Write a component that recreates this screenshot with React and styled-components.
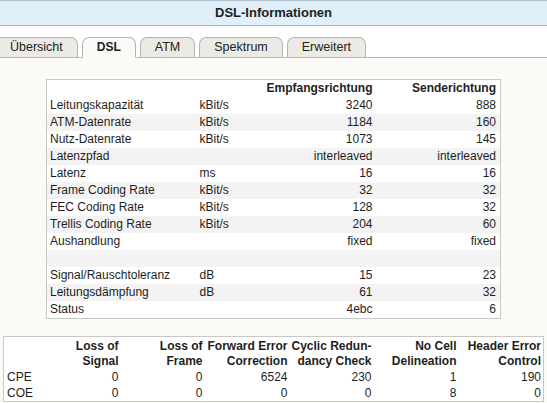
import React from "react";
import styled, { createGlobalStyle } from "styled-components";

const GlobalStyle = createGlobalStyle`
  html, body {
    margin: 0;
    padding: 0;
    background: #ffffff;
  }
  body {
    font-family: "Liberation Sans", Arial, sans-serif;
    font-size: 12px;
    color: #1e1e1e;
  }
`;

const Page = styled.div`
  width: 547px;
  height: 403px;
  display: flex;
  flex-direction: column;
  overflow: hidden;
`;

const TitleBar = styled.div`
  height: 24px;
  line-height: 24px;
  border-top: 1px solid #b3bfca;
  border-bottom: 1px solid #a9b6c1;
  background: #dff0fb;
  text-align: center;
  font-weight: bold;
  font-size: 13px;
  color: #222;
`;

const TabBar = styled.div`
  display: flex;
  align-items: flex-end;
  gap: 4px;
  height: 20px;
  padding-top: 11px;
  border-bottom: 1px solid #b8b8b8;
  background: #ffffff;
`;

const Tab = styled.div`
  box-sizing: border-box;
  height: 21px;
  margin-bottom: -1px;
  padding: 0 14px;
  line-height: 19px;
  font-size: ${(p) => (p.$active ? "12px" : "12.5px")};
  border: 1px solid #b5b5b5;
  border-bottom-color: ${(p) => (p.$active ? "#fbfaf6" : "#b8b8b8")};
  border-radius: 7px 7px 0 0;
  background: ${(p) => (p.$active ? "#fbfaf6" : "#ebeae5")};
  font-weight: ${(p) => (p.$active ? "bold" : "normal")};
  color: #222;
  white-space: nowrap;
  &:first-child {
    margin-left: -5px;
  }
`;

const Content = styled.div`
  flex: 1;
  background: #fbfaf6;
  display: flex;
  flex-direction: column;
  align-items: center;
  gap: 17px;
  padding-top: 21px;
`;

const InfoTable = styled.table`
  width: 454px;
  border-collapse: collapse;
  border: 1px solid #c8c8c8;
  background: #ffffff;
  table-layout: fixed;
`;

const Col = styled.col`
  width: ${(p) => p.$w}px;
`;

const InfoRow = styled.tr`
  height: 17px;
  background: ${(p) => (p.$stripe ? "#f3f3f3" : "#ffffff")};
`;

const Cell = styled.td`
  padding: 0 ${(p) => (p.$right ? "4px" : "3px")};
  line-height: 17px;
  text-align: ${(p) => (p.$right ? "right" : "left")};
  font-weight: ${(p) => (p.$head ? "bold" : "normal")};
  white-space: nowrap;
`;

const ErrorTable = styled.table`
  width: 540px;
  border-collapse: collapse;
  border: 1px solid #c8c8c8;
  background: #ffffff;
  table-layout: fixed;
`;

const HeadCell = styled.th`
  padding: 2px 2px 0 2px;
  line-height: 15px;
  text-align: right;
  font-weight: bold;
  vertical-align: top;
`;

const ErrRow = styled.tr`
  height: 16px;
`;

const ErrCell = styled.td`
  padding: 0 ${(p) => (p.$left ? "3px" : "2px")};
  line-height: 16px;
  text-align: ${(p) => (p.$left ? "left" : "right")};
`;

const tabs = ["Übersicht", "DSL", "ATM", "Spektrum", "Erweitert"];

const infoCols = [150, 62, 118, 124];
const errCols = [40, 77, 84, 85, 84, 85, 85];

const rows = [
  ["Leitungskapazität", "kBit/s", "3240", "888"],
  ["ATM-Datenrate", "kBit/s", "1184", "160"],
  ["Nutz-Datenrate", "kBit/s", "1073", "145"],
  ["Latenzpfad", "", "interleaved", "interleaved"],
  ["Latenz", "ms", "16", "16"],
  ["Frame Coding Rate", "kBit/s", "32", "32"],
  ["FEC Coding Rate", "kBit/s", "128", "32"],
  ["Trellis Coding Rate", "kBit/s", "204", "60"],
  ["Aushandlung", "", "fixed", "fixed"],
  ["", "", "", ""],
  ["Signal/Rauschtoleranz", "dB", "15", "23"],
  ["Leitungsdämpfung", "dB", "61", "32"],
  ["Status", "", "4ebc", "6"],
];

const errHeads = [
  ["Loss of", "Signal"],
  ["Loss of", "Frame"],
  ["Forward Error", "Correction"],
  ["Cyclic Redun-", "dancy Check"],
  ["No Cell", "Delineation"],
  ["Header Error", "Control"],
];

const errRows = [
  ["CPE", "0", "0", "6524", "230", "1", "190"],
  ["COE", "0", "0", "0", "0", "8", "0"],
];

export default function App() {
  return (
    <>
      <GlobalStyle />
      <Page>
        <TitleBar>DSL-Informationen</TitleBar>
        <TabBar>
          {tabs.map((t) => (
            <Tab key={t} $active={t === "DSL"}>
              {t}
            </Tab>
          ))}
        </TabBar>
        <Content>
          <InfoTable>
            <colgroup>
              {infoCols.map((w, i) => (
                <Col key={i} $w={w} />
              ))}
            </colgroup>
            <tbody>
              <InfoRow>
                <Cell />
                <Cell />
                <Cell $right $head>
                  Empfangsrichtung
                </Cell>
                <Cell $right $head>
                  Senderichtung
                </Cell>
              </InfoRow>
              {rows.map((r, i) => (
                <InfoRow key={i} $stripe={i % 2 === 1}>
                  <Cell>{r[0]}</Cell>
                  <Cell>{r[1]}</Cell>
                  <Cell $right>{r[2]}</Cell>
                  <Cell $right>{r[3]}</Cell>
                </InfoRow>
              ))}
            </tbody>
          </InfoTable>
          <ErrorTable>
            <colgroup>
              {errCols.map((w, i) => (
                <Col key={i} $w={w} />
              ))}
            </colgroup>
            <thead>
              <tr>
                <HeadCell />
                {errHeads.map((h) => (
                  <HeadCell key={h[0] + h[1]}>
                    {h[0]}
                    <br />
                    {h[1]}
                  </HeadCell>
                ))}
              </tr>
            </thead>
            <tbody>
              {errRows.map((r) => (
                <ErrRow key={r[0]}>
                  {r.map((c, j) => (
                    <ErrCell key={j} $left={j === 0}>
                      {c}
                    </ErrCell>
                  ))}
                </ErrRow>
              ))}
            </tbody>
          </ErrorTable>
        </Content>
      </Page>
    </>
  );
}
